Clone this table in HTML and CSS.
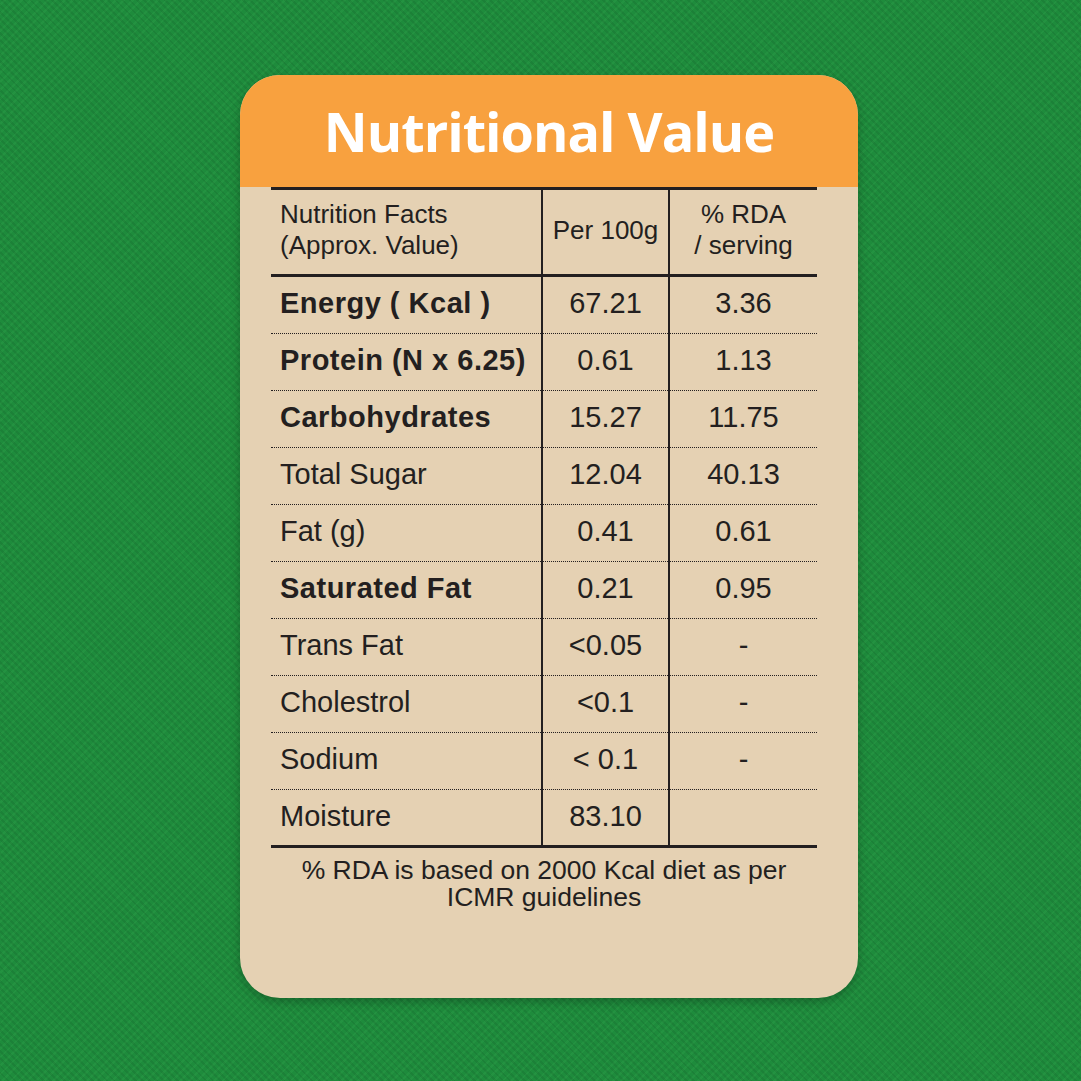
FILE: index.html
```html
<!DOCTYPE html>
<html>
<head>
<meta charset="utf-8">
<link rel="stylesheet" href="styles.css">
</head>
<body>
<div class="card">
  <div class="head"><h1>Nutritional Value</h1></div>
  <table class="facts">
    <colgroup><col class="w1"><col class="w2"><col class="w3"></colgroup>
    <thead>
      <tr><th class="c1">Nutrition Facts<br>(Approx. Value)</th><th class="c2">Per 100g</th><th class="c3">% RDA<br>/ serving</th></tr>
    </thead>
    <tbody>
      <tr><td class="c1 b">Energy ( Kcal )</td><td class="c2">67.21</td><td class="c3">3.36</td></tr>
      <tr><td class="c1 b">Protein (N x 6.25)</td><td class="c2">0.61</td><td class="c3">1.13</td></tr>
      <tr><td class="c1 b">Carbohydrates</td><td class="c2">15.27</td><td class="c3">11.75</td></tr>
      <tr><td class="c1">Total Sugar</td><td class="c2">12.04</td><td class="c3">40.13</td></tr>
      <tr><td class="c1">Fat (g)</td><td class="c2">0.41</td><td class="c3">0.61</td></tr>
      <tr><td class="c1 b">Saturated Fat</td><td class="c2">0.21</td><td class="c3">0.95</td></tr>
      <tr><td class="c1">Trans Fat</td><td class="c2">&lt;0.05</td><td class="c3">-</td></tr>
      <tr><td class="c1">Cholestrol</td><td class="c2">&lt;0.1</td><td class="c3">-</td></tr>
      <tr><td class="c1">Sodium</td><td class="c2">&lt; 0.1</td><td class="c3">-</td></tr>
      <tr class="last"><td class="c1">Moisture</td><td class="c2">83.10</td><td class="c3"></td></tr>
    </tbody>
  </table>
  <p class="note">% RDA is based on 2000 Kcal diet as per<br>ICMR guidelines</p>
</div>
</body>
</html>
```
FILE: styles.css
```css
html, body {
  margin: 0;
  padding: 0;
}
body {
  width: 1081px;
  height: 1081px;
  overflow: hidden;
  background-color: #1e8b3c;
  background-image:
    repeating-linear-gradient(45deg, rgba(0,0,0,0.07) 0 2px, transparent 2px 5px),
    repeating-linear-gradient(-45deg, rgba(120,255,140,0.06) 0 2px, transparent 2px 6px);
  padding-top: 75px;
  box-sizing: border-box;
  font-family: "Liberation Sans", Arial, sans-serif;
  color: #231f20;
}
.card {
  width: 618px;
  height: 923px;
  margin-left: 240px;
  background: #e5d1b3;
  border-radius: 40px;
  overflow: hidden;
  box-shadow: 0 4px 10px rgba(0,0,0,0.25);
}
.head {
  background: #f8a13f;
  height: 112px;
  display: flex;
  align-items: center;
  justify-content: center;
}
.head h1 {
  margin: 0;
  padding-top: 0;
  color: #fff;
  font-family: "Open Sans", sans-serif;
  font-weight: 700;
  font-size: 54px;
  letter-spacing: -1px;
}
.facts {
  width: 546px;
  margin-left: 31px;
  border-collapse: collapse;
  table-layout: fixed;
}
.w1 { width: 271px; }
.w2 { width: 127px; }
.w3 { width: 148px; }
.facts th {
  font-weight: 400;
  font-size: 26px;
  line-height: 31px;
  height: 80px;
  border-top: 3px solid #231f20;
  border-bottom: 3px solid #231f20;
  padding: 0 0 4px;
}
.facts td {
  font-size: 29px;
  line-height: 32px;
  height: 52px;
  padding: 0 0 4px;
  border-bottom: 1px dotted #231f20;
  white-space: nowrap;
}
.facts tr.last td {
  border-bottom: 3px solid #231f20;
  height: 51px;
}
.facts .c1 {
  text-align: left;
  padding-left: 9px;
}
.c2 {
  text-align: center;
  border-left: 2px solid #231f20;
}
.c3 {
  text-align: center;
  border-left: 2px solid #231f20;
}
.facts .b {
  font-weight: 700;
  letter-spacing: 0.5px;
}
.note {
  width: 546px;
  margin: 9px 0 0 31px;
  text-align: center;
  font-size: 26.5px;
  line-height: 27px;
}
```
